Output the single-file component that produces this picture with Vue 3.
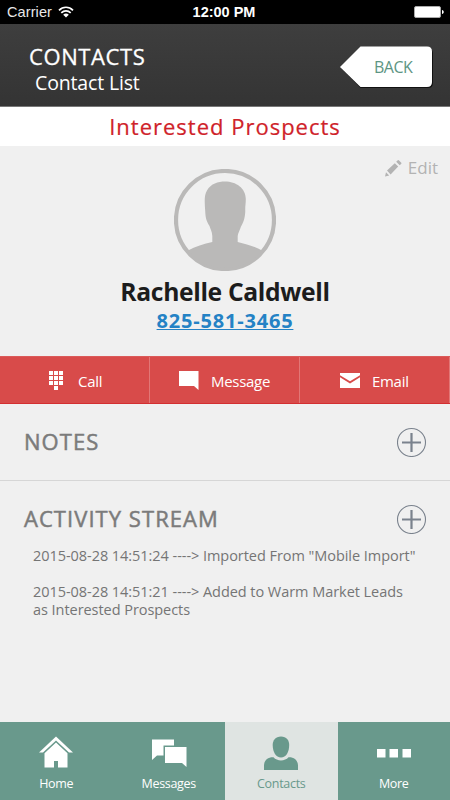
<template>
  <div class="screen">
    <div class="status">
      <div class="carrier">
        <span>Carrier</span>
        <svg class="wifi" width="16" height="12" viewBox="0 0 16 12">
          <path d="M1 4.300C5 .2 11 .2 15 4.300M3.300 6.800c2.700-2.700 6.700-2.700 9.400 0" fill="none" stroke="#fff" stroke-width="1.700" />
          <path d="M5.200 8.700C6.800 7.100 9.200 7.100 10.800 8.700L8 11.600z" fill="#fff" />
        </svg>
      </div>
      <span class="clock">12:00 PM</span>
      <svg class="battery" width="30" height="12" viewBox="0 0 30 12">
        <rect x=".5" y=".5" width="26" height="11" rx="1.500" fill="#fff" stroke="#aaa" />
        <path d="M28 4c2.300 .5 2.300 3.500 0 4z" fill="#fff" />
      </svg>
    </div>

    <header class="header">
      <div class="titles">
        <h1>CONTACTS</h1>
        <p>Contact List</p>
      </div>
      <button class="back">
        <svg width="93" height="43" viewBox="0 0 93 43">
          <path d="M1 22 20.500 2.500H88q5 0 5 5V37q0 5-5 5H20.500z" fill="#111" />
          <path d="M0 21 20.500 .5H87q5 0 5 5V36q0 5-5 5H20.500z" fill="#fff" />
        </svg>
        <span>BACK</span>
      </button>
    </header>

    <h2 class="group">Interested Prospects</h2>

    <section class="profile">
      <button class="edit">
        <svg width="18" height="18" viewBox="0 0 18 18">
          <path d="M1 17.500l1-4.300 3.200 3.200zM3 11.600l7.800-7.400 3.400 3.400-7.600 7.800zM12.200 2.800l1.600-1.600q.5-.4 1 0l2.500 2.500q.4.500 0 1l-1.600 1.500z" fill="#b3b3b3" />
        </svg>
        <span>Edit</span>
      </button>
      <svg class="avatar" width="102" height="102" viewBox="0 0 102 102">
        <circle cx="51" cy="51" r="49" fill="none" stroke="#bab9b8" stroke-width="4.200" />
        <path d="M14 81.500C21 77.500 30 75 38.300 73V67C38 62 36 59 35.500 57C33 53 31.500 50 31.200 42C30.600 33 30 26 33 21.500C37 14.500 44 12.500 51 12.500C62 12.500 71.800 19 71.800 30C71.800 35 71 38 71.300 42C71 50 69 54 67 57.500C66 61 64 64 63.700 67V73C72 75 81 77.500 88 81.500A48 48 0 0 1 14 81.500z" fill="#bab9b8" />
      </svg>
      <h3>Rachelle Caldwell</h3>
      <a class="phone" href="#">825-581-3465</a>
    </section>

    <div class="actions">
      <button class="call">
        <svg width="14" height="19" viewBox="0 0 14 19">
          <path d="M0 0h4v4H0zM5 0h4v4H5zM10 0h4v4h-4zM0 5h4v4H0zM5 5h4v4H5zM10 5h4v4h-4zM0 10h4v4H0zM5 10h4v4H5zM10 10h4v4h-4zM5 15h4v4H5z" fill="#fff" />
        </svg>
        <span>Call</span>
      </button>
      <button class="message">
        <svg width="20" height="19" viewBox="0 0 20 19">
          <path d="M0 0h19.500v19L15 15H0z" fill="#fff" />
        </svg>
        <span>Message</span>
      </button>
      <button class="email">
        <svg width="20" height="15" viewBox="0 0 20 15">
          <path d="M0 0h20v2.200L10 8.300 0 2.200zM0 4.300l10 6.100 10-6.100V15H0z" fill="#fff" />
        </svg>
        <span>Email</span>
      </button>
    </div>

    <section class="panel notes">
      <h4>NOTES</h4>
      <svg width="30" height="30" viewBox="0 0 30 30">
        <circle cx="14.500" cy="15.500" r="14" fill="none" stroke="#7a828d" stroke-width="1.100" />
        <path d="M14.500 6v19M5 15.500h19" stroke="#7a828d" stroke-width="2.200" />
      </svg>
    </section>

    <section class="panel">
      <h4>ACTIVITY STREAM</h4>
      <svg width="30" height="30" viewBox="0 0 30 30">
        <circle cx="14.500" cy="15.500" r="14" fill="none" stroke="#7a828d" stroke-width="1.100" />
        <path d="M14.500 6v19M5 15.500h19" stroke="#7a828d" stroke-width="2.200" />
      </svg>
    </section>
    <ul class="stream">
      <li v-for="item in activity" :key="item.date">{{ item.date }} ----&gt; {{ item.text }}</li>
    </ul>

    <nav class="tabs">
      <a class="tab">
        <svg width="34" height="34" viewBox="0 0 34 34">
          <path d="M0 17.500 17 1.500l17 16h-4L17 5.500 4 17.500z" fill="#fff" />
          <path d="M5.500 18.200 17 7.500l11.500 10.700V32.500H19V26h-4v6.500H5.500z" fill="#fff" />
        </svg>
        <span>Home</span>
      </a>
      <a class="tab">
        <svg width="36" height="34" viewBox="0 0 36 34">
          <path d="M1 4.500h22v6H12.500v10H6L1 25z" fill="#fff" />
          <path d="M14 12h21.500v20L31 28H14z" fill="#fff" />
        </svg>
        <span>Messages</span>
      </a>
      <a class="tab active">
        <svg width="34" height="36" viewBox="0 0 34 36">
          <path d="M17 1.500c5.500 0 8.200 3.700 8.200 8.500 0 7-3.200 12.500-8.200 12.500S8.700 17 8.700 10c0-4.800 2.800-8.500 8.300-8.500z" fill="#69998c" />
          <path d="M0 35v-4.500c0-5 4-8.500 9.500-8.200C13 26.500 21 26.500 24.500 22.300 30 22 34 25.500 34 30.500V35z" fill="#69998c" />
        </svg>
        <span>Contacts</span>
      </a>
      <a class="tab">
        <svg width="36" height="34" viewBox="0 0 36 34">
          <path d="M1 14h8.500v8.500H1zM13.500 14H22v8.500h-8.500zM26.500 14H35v8.500h-8.500z" fill="#fff" />
        </svg>
        <span>More</span>
      </a>
    </nav>
  </div>
</template>

<script setup>
const activity = [
  { date: '2015-08-28 14:51:24', text: 'Imported From "Mobile Import"' },
  { date: '2015-08-28 14:51:21', text: 'Added to Warm Market Leads as Interested Prospects' },
];
</script>

<style>
body {
  background: #f0f0f0;
}
</style>

<style scoped>
* {
  box-sizing: border-box;
  margin: 0;
  padding: 0;
}

.screen {
  display: flex;
  flex-direction: column;
  width: 450px;
  height: 800px;
  background: #f0f0f0;
  font-family: 'Open Sans', sans-serif;
  overflow: hidden;
}

button {
  border: none;
  background: none;
  font-family: inherit;
}

svg {
  display: block;
  flex: none;
}

.status {
  display: grid;
  grid-template-columns: 1fr auto 1fr;
  align-items: center;
  height: 24px;
  padding: 0 6px 0 7px;
  background: #000;
  color: #fff;
  font: 14.500px/24px 'Liberation Sans', sans-serif;
}

.carrier {
  display: flex;
  align-items: center;
  gap: 6px;
  color: #e8e8e8;
  letter-spacing: 0.100px;
}

.clock {
  margin-left: -3px;
  font-weight: bold;
  font-size: 14.500px;
}

.battery {
  justify-self: end;
}

.header {
  display: flex;
  justify-content: space-between;
  height: 83px;
  padding: 19px 17px 0 29px;
  background: linear-gradient(#3e3e3e, #343434);
  border-bottom: 1px solid #777;
  color: #fff;
}

h1 {
  font-size: 22px;
  font-weight: 400;
  line-height: 26px;
  letter-spacing: 0.600px;
  -webkit-text-stroke: 0.3px #fff;
}

.titles p {
  margin-top: 1px;
  padding-left: 6px;
  font-size: 19.500px;
  line-height: 26px;
  letter-spacing: -0.150px;
}

.back {
  display: grid;
  margin-top: 3px;
  width: 93px;
  height: 43px;
}

.back > * {
  grid-area: 1 / 1;
}

.back span {
  padding-left: 34px;
  color: #5d9583;
  font-size: 16px;
  line-height: 43px;
  letter-spacing: -0.500px;
  text-align: left;
}

.group {
  height: 39px;
  background: #fff;
  color: #cf2229;
  font-size: 22px;
  font-weight: 400;
  line-height: 39px;
  letter-spacing: 1px;
  text-align: center;
  -webkit-text-stroke: 0.2px #cf2229;
}

.profile {
  display: flex;
  flex-direction: column;
  align-items: center;
  height: 210px;
}

.edit {
  display: flex;
  align-items: center;
  align-self: flex-end;
  gap: 6px;
  height: 23px;
  padding: 20px 12px 0 0;
  color: #b3b3b3;
  font-size: 17px;
  line-height: 24px;
}

h3 {
  margin-top: 7px;
  color: #1c1c1c;
  font-size: 24.700px;
  font-weight: 700;
  line-height: 28px;
  letter-spacing: -0.350px;
}

.phone {
  margin-top: 1px;
  color: #2482c5;
  font-size: 20px;
  font-weight: 700;
  line-height: 28px;
  letter-spacing: 0.800px;
  text-decoration-thickness: 1px;
}

.actions {
  display: grid;
  grid-template-columns: repeat(3, 1fr);
  height: 48px;
  background: #d84b4a;
  border-top: 1px solid #db5a59;
  border-bottom: 1px solid #d32f31;
}

.actions button {
  display: flex;
  align-items: center;
  color: #fff;
  font-size: 15px;
  letter-spacing: -0.300px;
  border-right: 1px solid #e27776;
}

.actions span {
  padding-top: 1px;
}

.actions .call {
  gap: 15px;
  padding-left: 49px;
}

.actions .message {
  gap: 12px;
  padding-left: 29px;
}

.actions .email {
  gap: 12px;
  padding-left: 40px;
}

.panel {
  display: flex;
  align-items: center;
  justify-content: space-between;
  height: 76px;
  padding: 0 23px 0 24px;
}

.notes {
  height: 77px;
  border-bottom: 1px solid #d6d6d6;
}

h4 {
  padding-bottom: 2px;
  color: #7b7b7b;
  font-size: 22px;
  font-weight: 400;
  letter-spacing: 1.050px;
  -webkit-text-stroke: 0.5px #7b7b7b;
}

.stream {
  flex: 1;
  padding: 0 33px;
  margin-top: -10px;
  list-style: none;
  color: #757575;
  font-size: 14.500px;
  line-height: 18px;
  letter-spacing: -0.050px;
}

.stream li {
  margin-bottom: 18px;
}

.tabs {
  display: grid;
  grid-template-columns: repeat(4, 1fr);
  height: 78px;
}

.tab {
  display: flex;
  flex-direction: column;
  align-items: center;
  justify-content: space-between;
  padding: 13px 0 6px;
  background: #69998c;
  color: #fff;
  font-size: 12.500px;
  line-height: 20px;
  letter-spacing: -0.300px;
}

.active {
  background: #dfe4e2;
  color: #69998c;
}
</style>
